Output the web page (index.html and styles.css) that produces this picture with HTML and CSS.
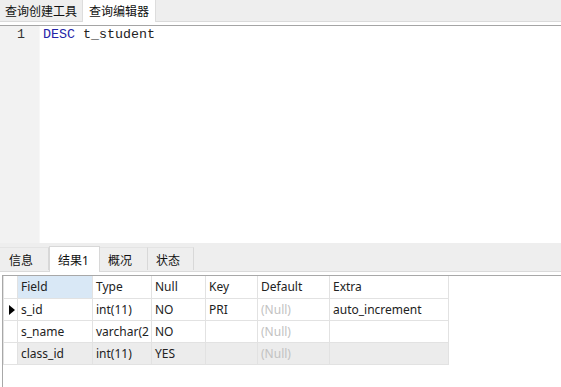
FILE: index.html
```html
<!DOCTYPE html>
<html lang="zh-CN">
<head>
    <meta charset="UTF-8">
    <title>查询编辑器</title>
    <link rel="stylesheet" href="styles.css">
</head>
<body>
    <div class="window">
        <div class="top-tabs">
            <div class="top-tab">查询创建工具</div>
            <div class="top-tab active">查询编辑器</div>
        </div>
        <div class="top-gap"></div>

        <div class="editor">
            <div class="gutter">
                <div class="line-no">1</div>
            </div>
            <div class="code">
                <div class="code-line"><span class="kw">DESC</span> t_student</div>
            </div>
        </div>

        <div class="result-panel">
            <div class="result-tabs">
                <div class="result-tab">信息</div>
                <div class="result-tab active">结果1</div>
                <div class="result-tab">概况</div>
                <div class="result-tab">状态</div>
            </div>
            <div class="result-gap"></div>

            <div class="grid-area">
                <table class="grid">
                    <thead>
                        <tr>
                            <th class="ind"></th>
                            <th class="col-field sorted">Field</th>
                            <th class="col-type">Type</th>
                            <th class="col-null">Null</th>
                            <th class="col-key">Key</th>
                            <th class="col-default">Default</th>
                            <th class="col-extra">Extra</th>
                        </tr>
                    </thead>
                    <tbody>
                        <tr>
                            <td class="ind"><span class="cursor"></span></td>
                            <td>s_id</td>
                            <td>int(11)</td>
                            <td>NO</td>
                            <td>PRI</td>
                            <td class="null">(Null)</td>
                            <td>auto_increment</td>
                        </tr>
                        <tr>
                            <td class="ind"></td>
                            <td>s_name</td>
                            <td class="clip">varchar(2</td>
                            <td>NO</td>
                            <td></td>
                            <td class="null">(Null)</td>
                            <td></td>
                        </tr>
                        <tr class="current">
                            <td class="ind"></td>
                            <td>class_id</td>
                            <td>int(11)</td>
                            <td>YES</td>
                            <td></td>
                            <td class="null">(Null)</td>
                            <td></td>
                        </tr>
                    </tbody>
                </table>
            </div>
        </div>
    </div>
</body>
</html>
```

FILE: styles.css
```css
* {
    margin: 0;
    padding: 0;
    box-sizing: border-box;
}

body {
    width: 561px;
    height: 387px;
    overflow: hidden;
    background: #ffffff;
    font-family: "Noto Sans", "Noto Sans CJK SC", sans-serif;
    font-size: 12px;
    color: #222222;
}

.window {
    display: flex;
    flex-direction: column;
    height: 100%;
}

/* Top tab strip */
.top-tabs {
    display: flex;
    height: 22px;
    background: #eeeeee;
    border-bottom: 1px solid #dadada;
}

.top-tab {
    display: flex;
    align-items: center;
    flex-shrink: 0;
    padding: 0 5px;
    width: 82px;
    height: 21px;
    white-space: nowrap;
    color: #111111;
}

.top-tab.active {
    width: 74px;
    height: 22px;
    padding-left: 6px;
    padding-right: 0;
    background: #ffffff;
    border-left: 1px solid #dddddd;
    border-right: 1px solid #dddddd;
}

.top-gap {
    height: 4px;
    background: #ffffff;
    border-bottom: 1px solid #a5a5a5;
}

/* Editor */
.editor {
    display: flex;
    height: 217px;
    font-family: "Liberation Mono", monospace;
    font-size: 13.33px;
    line-height: 16px;
}

.gutter {
    width: 40px;
    background: #f2f2f2;
    border-right: 1px solid #f7f7f7;
    padding-top: 1px;
    text-align: right;
    padding-right: 14px;
    color: #333333;
}

.code {
    flex: 1;
    padding: 1px 0 0 3px;
    color: #222222;
}

.kw {
    color: #2323a8;
}

/* Result panel */
.result-panel {
    flex: 1;
    display: flex;
    flex-direction: column;
}

.result-tabs {
    display: flex;
    align-items: flex-end;
    height: 29px;
    padding-bottom: 1px;
    background: #eeeeee;
    border-bottom: 1px solid #dadada;
}

.result-tab {
    display: flex;
    align-items: center;
    width: 48px;
    height: 23px;
    padding: 1px 0 0 8px;
    border-right: 1px solid #d8d8d8;
    border-top: 1px solid #e4e4e4;
    white-space: nowrap;
    color: #111111;
}

.result-tab:first-child {
    width: 49px;
    padding-left: 9px;
}

.result-tab:last-child {
    width: 46px;
}

.result-tab.active {
    height: 26px;
    margin-bottom: -2px;
    background: #ffffff;
    padding-left: 8px;
    border-left: 1px solid #d8d8d8;
    border-top: 1px solid #d8d8d8;
    width: 51px;
}

.result-gap {
    height: 3px;
    background: #ffffff;
}

.grid-area {
    flex: 1;
    margin-left: 2px;
    border-left: 1px solid #a8a8a8;
    border-top: 1px solid #a8a8a8;
}

.grid {
    border-collapse: collapse;
    table-layout: fixed;
}

.grid th,
.grid td {
    height: 22px;
    padding: 0 0 0 3px;
    text-align: left;
    font-weight: normal;
    white-space: nowrap;
    overflow: hidden;
    border-right: 1px solid #e2e2e2;
    border-bottom: 1px solid #e2e2e2;
    color: #222222;
}

.grid .ind {
    width: 14px;
    padding: 0;
    border-left: 1px solid #e2e2e2;
    position: relative;
}

.grid th.sorted {
    background: #d9e8f6;
}

.col-field { width: 75px; }
.col-type { width: 59px; }
.col-null { width: 54px; }
.col-key { width: 52px; }
.col-default { width: 72px; }
.col-extra { width: 119px; }

.grid td.clip {
    text-overflow: clip;
}

.grid td.null {
    color: #c2c2c2;
}

.grid tr.current td {
    background: #ececec;
}

.grid tr.current td.ind {
    background: #ffffff;
}

.cursor {
    position: absolute;
    left: 5px;
    top: 6px;
    border-top: 5px solid transparent;
    border-bottom: 5px solid transparent;
    border-left: 6px solid #000000;
}
```
